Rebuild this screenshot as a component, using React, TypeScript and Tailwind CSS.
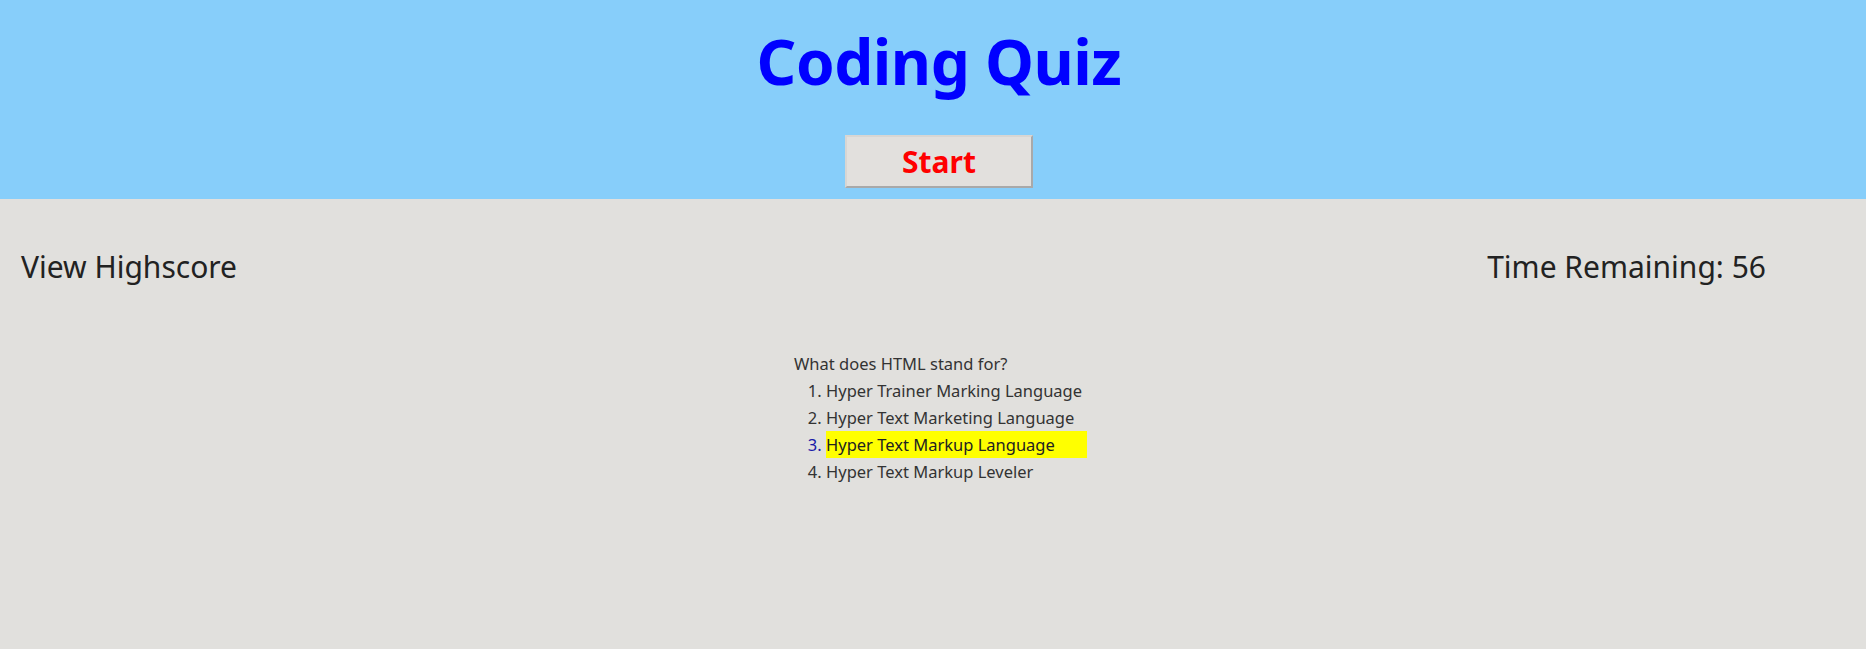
import React from "react";

const answers = [
  "Hyper Trainer Marking Language",
  "Hyper Text Marketing Language",
  "Hyper Text Markup Language",
  "Hyper Text Markup Leveler",
];

export default function App() {
  const selected = 2;

  return (
    <div
      className="min-h-[649px] bg-[#e1e0dd] text-[#222]"
      style={{ fontFamily: '"Noto Sans", "Open Sans", sans-serif' }}
    >
      {/* Header */}
      <header className="h-[199px] bg-[#87cefa] flex flex-col items-center pl-[12px]">
        <h1 className="mt-[21px] text-[62px] leading-[80px] font-bold text-[#0000ff] tracking-[-0.5px]">
          Coding Quiz
        </h1>
        <button className="mt-[34px] w-[188px] h-[53px] bg-[#e2e0dd] border-2 border-t-[#d8d6d3] border-l-[#d8d6d3] border-r-[#a9a9a9] border-b-[#a9a9a9] text-[#ff0000] text-[30px] font-bold leading-none">
          Start
        </button>
      </header>

      {/* Top row */}
      <div className="flex justify-between pl-[21px] pr-[100px] pt-[48px] text-[30px] leading-[40px] text-[#222]">
        <span>View Highscore</span>
        <span>Time Remaining: 56</span>
      </div>

      {/* Question */}
      <div className="mx-auto w-[278px] mt-[63px] text-[16.5px] leading-[27px] text-[#333] whitespace-nowrap">
        <p>What does HTML stand for?</p>
        <ol className="list-decimal pl-[32px]">
          {answers.map((a, i) => (
            <li key={a} className={i === selected ? "text-[#1a1aa8]" : ""}>
              <span
                className={
                  i === selected
                    ? "inline-block w-[261px] bg-[#ffff00] text-[#222] leading-[27px] align-top"
                    : ""
                }
              >
                {a}
              </span>
            </li>
          ))}
        </ol>
      </div>
    </div>
  );
}
